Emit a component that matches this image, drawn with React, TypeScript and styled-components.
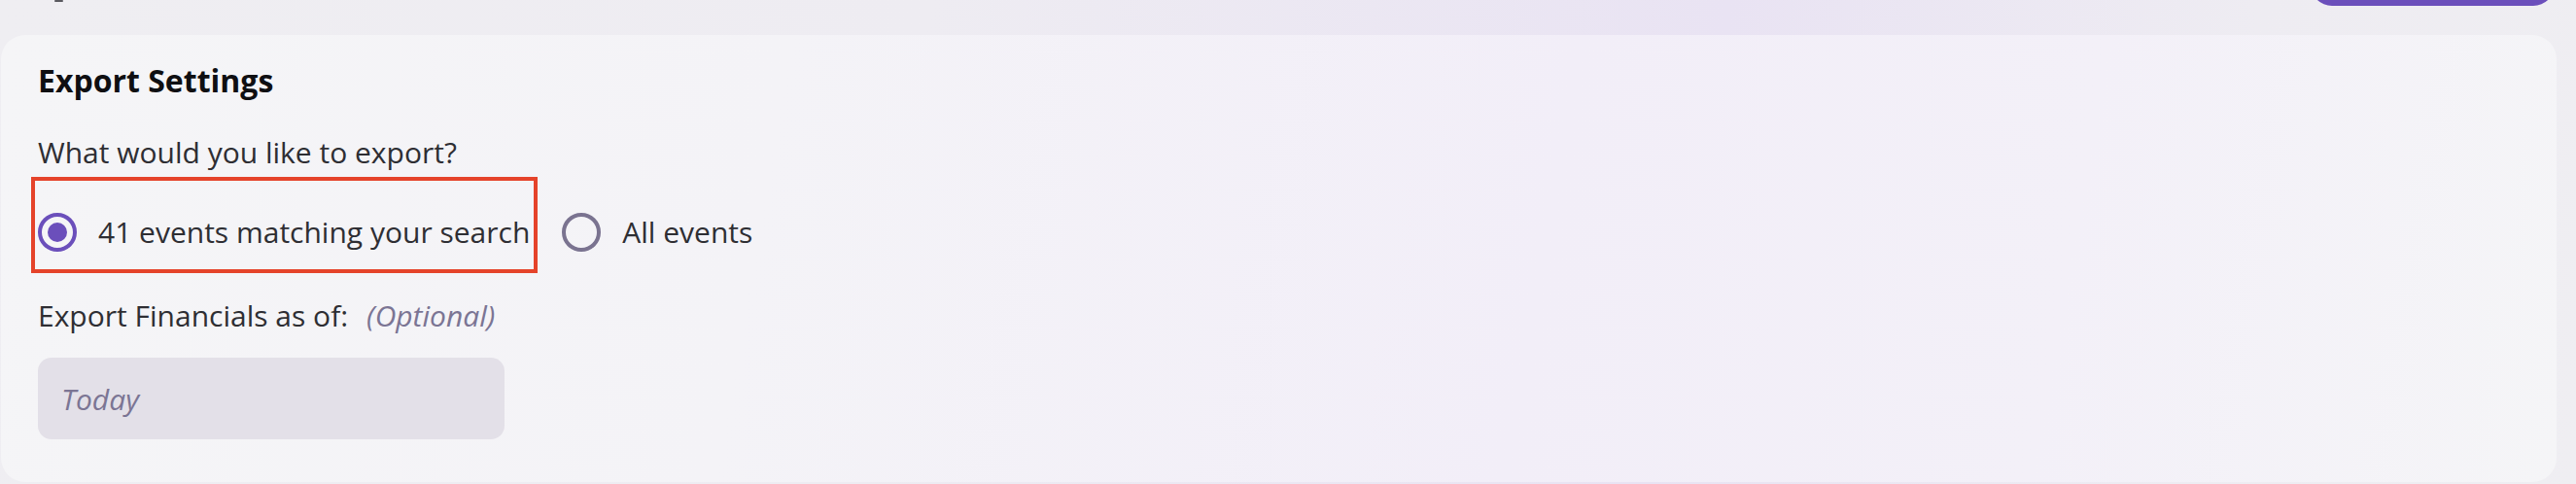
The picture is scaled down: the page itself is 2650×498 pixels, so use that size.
import React from 'react'
import styled, { createGlobalStyle } from 'styled-components'

const GlobalStyle = createGlobalStyle`
  html, body {
    margin: 0;
    padding: 0;
    overflow: hidden;
  }
  body {
    font-family: "Open Sans", "Noto Sans", sans-serif;
    background: linear-gradient(100deg, #efeef2 0%, #eeecf2 35%, #e9e3f3 65%, #eeecf2 85%, #efeef2 100%);
    color: #2e2e33;
  }
`

const Page = styled.div`
  width: 2650px;
  height: 498px;
  box-sizing: border-box;
  padding: 0 20px 0 1px;
  display: flex;
  flex-direction: column;
  overflow: hidden;
`

const HeaderRow = styled.div`
  height: 56px;
  margin-top: -50px;
  display: flex;
  align-items: flex-end;
  justify-content: space-between;
`

const Crumb = styled.span`
  width: 9px;
  height: 2px;
  margin: 0 0 4px 55px;
  border-radius: 1px;
  background: #5a5a60;
`

const PrimaryButton = styled.button`
  width: 251px;
  height: 56px;
  margin-right: 2px;
  border: none;
  border-radius: 22px;
  background: #6b4fbb;
`

const Card = styled.section`
  margin-top: 30px;
  height: 460px;
  box-sizing: border-box;
  border-radius: 25px;
  padding: 27px 38px 42px 38px;
  background: linear-gradient(100deg, #f5f5f7 0%, #f4f3f7 30%, #f2eef8 60%, #f3f0f8 80%, #f5f5f7 100%);
  display: flex;
  flex-direction: column;
`

const Title = styled.h2`
  margin: 0;
  font-size: 32px;
  line-height: 40px;
  font-weight: 700;
  color: #0f0f12;
`

const Label = styled.p<{ $gap: number }>`
  margin: ${p => p.$gap}px 0 0 0;
  font-size: 30px;
  line-height: 40px;
  color: #2e2e33;
`

const Hint = styled.em`
  margin-left: 19px;
  color: #7b7594;
`

const OptionRow = styled.div`
  margin-top: 5px;
  display: flex;
  align-items: flex-end;
  gap: 25px;
`

const Highlight = styled.div`
  margin-left: -7px;
  border: 4px solid #e5432a;
  padding: 33px 4px 18px 3px;
`

const Option = styled.label`
  display: flex;
  align-items: center;
  gap: 22px;
  font-size: 30px;
  line-height: 40px;
  color: #2e2e33;
`

const OptionWrap = styled.div`
  padding-bottom: 22px;
`

const RadioDot = styled.span<{ $checked?: boolean }>`
  width: 40px;
  height: 40px;
  box-sizing: border-box;
  border-radius: 50%;
  border: 4px solid ${p => (p.$checked ? '#6b4fbb' : '#7a7390')};
  display: flex;
  align-items: center;
  justify-content: center;
  flex-shrink: 0;

  &::after {
    content: '';
    width: 20px;
    height: 20px;
    border-radius: 50%;
    background: #6b4fbb;
    display: ${p => (p.$checked ? 'block' : 'none')};
  }
`

const DateInput = styled.input`
  margin-top: 23px;
  width: 480px;
  height: 84px;
  box-sizing: border-box;
  border: none;
  border-radius: 14px;
  padding: 0 24px;
  background: #e3e0e8;
  font-family: "Open Sans", "Noto Sans", sans-serif;
  font-size: 30px;
  color: #2e2e33;
  outline: none;

  &::placeholder {
    color: #7b7594;
    font-style: italic;
  }
`

const App = () => {
  return (
    <Page>
      <GlobalStyle />
      <HeaderRow>
        <Crumb />
        <PrimaryButton aria-label="Export" />
      </HeaderRow>

      <Card>
        <Title>Export Settings</Title>

        <Label $gap={34}>What would you like to export?</Label>

        <OptionRow>
          <Highlight>
            <Option>
              <RadioDot $checked />
              41 events matching your search
            </Option>
          </Highlight>
          <OptionWrap>
            <Option>
              <RadioDot />
              All events
            </Option>
          </OptionWrap>
        </OptionRow>

        <Label $gap={24}>
          Export Financials as of:
          <Hint>(Optional)</Hint>
        </Label>

        <DateInput placeholder="Today" />
      </Card>
    </Page>
  )
}

export default App
